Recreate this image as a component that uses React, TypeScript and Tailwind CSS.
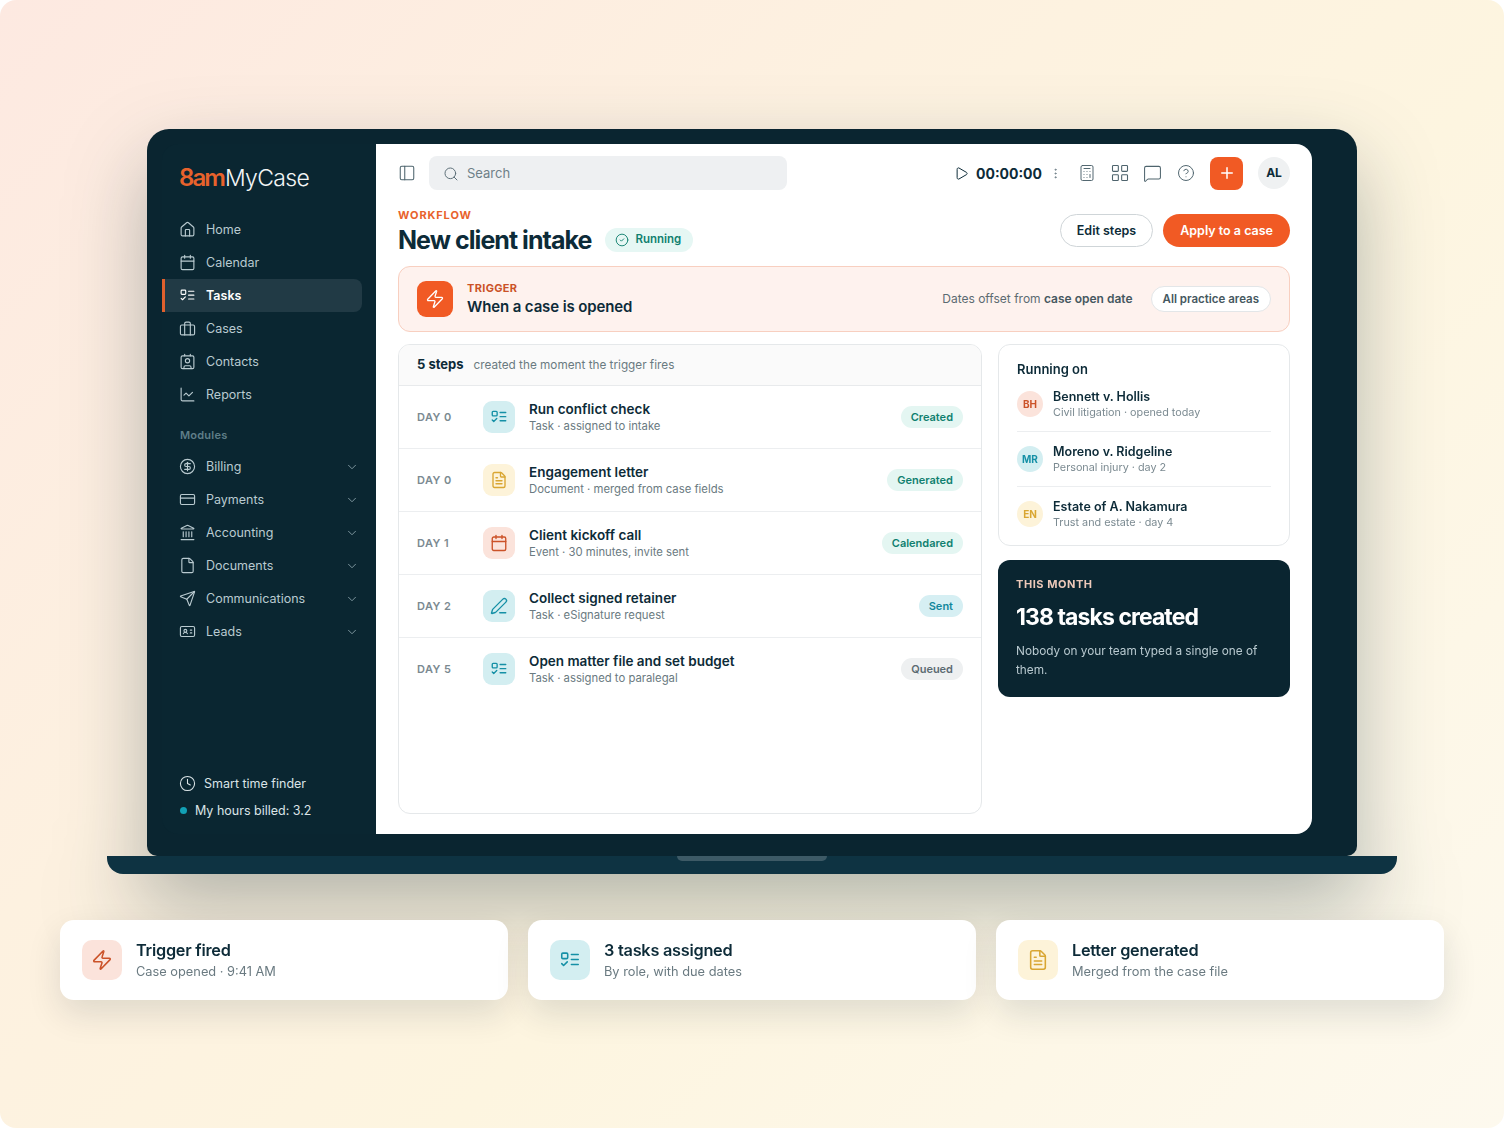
import {
  Calculator,
  Calendar,
  ChartLine,
  ChevronDown,
  CircleCheck,
  CircleDollarSign,
  CircleHelp,
  Clock,
  Contact,
  CreditCard,
  EllipsisVertical,
  File,
  FileText,
  House,
  IdCard,
  Landmark,
  LayoutGrid,
  MessageSquare,
  PanelLeft,
  PenLine,
  Play,
  Plus,
  Search,
  Send,
  Zap,
} from "lucide-react";
import type { ComponentType } from "react";

type IconProps = { size?: number; strokeWidth?: number; className?: string };
type Icon = ComponentType<IconProps>;

function CaseIcon({ size = 16, strokeWidth = 1.5, className }: IconProps) {
  return (
    <svg width={size} height={size} viewBox="0 0 24 24" fill="none" stroke="currentColor" strokeWidth={strokeWidth} strokeLinecap="round" strokeLinejoin="round" className={className}>
      <rect x="2" y="7" width="20" height="14" rx="2" />
      <path d="M16 21V5a2 2 0 0 0-2-2h-4a2 2 0 0 0-2 2v16" />
    </svg>
  );
}

function TaskIcon({ size = 16, strokeWidth = 1.8, className }: IconProps) {
  return (
    <svg width={size} height={size} viewBox="0 0 24 24" fill="none" stroke="currentColor" strokeWidth={strokeWidth} strokeLinecap="round" strokeLinejoin="round" className={className}>
      <rect x="3" y="4.5" width="6.5" height="6" rx="1.2" />
      <path d="m3 16 2 2 4-4" />
      <path d="M13.5 6H21" />
      <path d="M13.5 11.5H21" />
      <path d="M13.5 17H21" />
    </svg>
  );
}

const mainNav: { label: string; icon: Icon; active?: boolean }[] = [
  { label: "Home", icon: House },
  { label: "Calendar", icon: Calendar },
  { label: "Tasks", icon: TaskIcon, active: true },
  { label: "Cases", icon: CaseIcon },
  { label: "Contacts", icon: Contact },
  { label: "Reports", icon: ChartLine },
];

const modules: { label: string; icon: Icon }[] = [
  { label: "Billing", icon: CircleDollarSign },
  { label: "Payments", icon: CreditCard },
  { label: "Accounting", icon: Landmark },
  { label: "Documents", icon: File },
  { label: "Communications", icon: Send },
  { label: "Leads", icon: IdCard },
];

const steps = [
  { day: "DAY 0", icon: TaskIcon, tone: "bg-[#d3eef1] text-[#1590a6]", title: "Run conflict check", sub: "Task · assigned to intake", badge: "Created", badgeTone: "bg-[#e4f6f2] text-[#10806f]" },
  { day: "DAY 0", icon: FileText, tone: "bg-[#fdf3d9] text-[#d9a632]", title: "Engagement letter", sub: "Document · merged from case fields", badge: "Generated", badgeTone: "bg-[#e4f6f2] text-[#10806f]" },
  { day: "DAY 1", icon: Calendar, tone: "bg-[#fbe3db] text-[#cb5228]", title: "Client kickoff call", sub: "Event · 30 minutes, invite sent", badge: "Calendared", badgeTone: "bg-[#e4f6f2] text-[#10806f]" },
  { day: "DAY 2", icon: PenLine, tone: "bg-[#d3eef1] text-[#1590a6]", title: "Collect signed retainer", sub: "Task · eSignature request", badge: "Sent", badgeTone: "bg-[#d6eff3] text-[#12879c]" },
  { day: "DAY 5", icon: TaskIcon, tone: "bg-[#d3eef1] text-[#1590a6]", title: "Open matter file and set budget", sub: "Task · assigned to paralegal", badge: "Queued", badgeTone: "bg-[#eef0f1] text-[#5c6b72]" },
];

const running = [
  { initials: "BH", tone: "bg-[#fbe3db] text-[#cb5228]", name: "Bennett v. Hollis", sub: "Civil litigation · opened today" },
  { initials: "MR", tone: "bg-[#d3eef1] text-[#1590a6]", name: "Moreno v. Ridgeline", sub: "Personal injury · day 2" },
  { initials: "EN", tone: "bg-[#fdf3d9] text-[#d9a632]", name: "Estate of A. Nakamura", sub: "Trust and estate · day 4" },
];

const events = [
  { icon: Zap, iconSize: 22, tone: "bg-[#fbe3db] text-[#cb5228]", title: "Trigger fired", sub: "Case opened · 9:41 AM" },
  { icon: TaskIcon, iconSize: 22, tone: "bg-[#d3eef1] text-[#1590a6]", title: "3 tasks assigned", sub: "By role, with due dates" },
  { icon: FileText, iconSize: 22, tone: "bg-[#fdf3d9] text-[#d9a632]", title: "Letter generated", sub: "Merged from the case file" },
];

function Sidebar() {
  return (
    <aside className="flex w-[214px] shrink-0 flex-col rounded-l-[16px] bg-[#0a2631] pr-[14px]">
      <div className="ml-[17px] mt-[15px] flex h-[38px] items-center leading-none">
        <span className="text-[24px] font-semibold tracking-[-0.08em] text-[#e8622c]">8am</span>
        <span className="ml-px text-[23px] font-light tracking-[-0.03em] text-[#f2f5f6]">MyCase</span>
      </div>

      <nav className="mt-[16px] flex flex-col">
        {mainNav.map((item) => (
          <div
            key={item.label}
            className={`flex h-[33px] items-center gap-[10px] text-[12.5px] ${
              item.active
                ? "rounded-r-[8px] border-l-[3px] border-[#e0602d] bg-[#213a45] pl-[14px] font-semibold text-white"
                : "pl-[17px] text-[#b9cad0]"
            }`}
          >
            <item.icon size={17} strokeWidth={1.6} className="shrink-0" />
            <span className="mt-[2px]">{item.label}</span>
          </div>
        ))}
      </nav>

      <div className="ml-[18px] mt-[15px] h-[18px] text-[11px] font-semibold leading-[18px] tracking-[0.02em] text-[#5f7e88]">Modules</div>

      <nav className="mt-[6px] flex flex-col">
        {modules.map((item) => (
          <div key={item.label} className="flex h-[33px] items-center gap-[10px] pl-[17px] pr-[3px] text-[12.5px] text-[#b9cad0]">
            <item.icon size={17} strokeWidth={1.6} className="shrink-0" />
            <span className="mt-[2px] flex-1">{item.label}</span>
            <ChevronDown size={14} strokeWidth={1.5} className="text-[#8ba4ac]" />
          </div>
        ))}
      </nav>

      <div className="mt-auto flex flex-col pb-[10px] pl-[17px] text-[12.5px] text-[#dbe4e7]">
        <div className="flex h-[27px] items-center gap-[8px]">
          <Clock size={17} strokeWidth={1.5} />
          <span className="mt-[2px]">Smart time finder</span>
        </div>
        <div className="ml-px flex h-[27px] items-center gap-[8px]">
          <span className="h-[7px] w-[7px] rounded-full bg-[#12a0b5]" />
          <span className="mt-[2px]">My hours billed: 3.2</span>
        </div>
      </div>
    </aside>
  );
}

function TopBar() {
  return (
    <header className="flex h-[34px] items-center">
      <PanelLeft size={18} strokeWidth={1.4} className="text-[#4e646d]" />
      <div className="ml-[13px] flex h-[34px] w-[358px] items-center gap-[8px] rounded-[8px] bg-[#eef0f2] pl-[14px] pt-px text-[13px] text-[#6f8088]">
        <Search size={16} strokeWidth={1.5} className="text-[#5e7079]" />
        Search
      </div>
      <Play size={15} strokeWidth={1.6} className="ml-[167px] text-[#0d2b38]" />
      <span className="ml-[7px] mt-px w-[65px] text-[14px] font-bold text-[#0d2b38]">00:00:00</span>
      <EllipsisVertical size={13} strokeWidth={1.8} className="ml-[8px] text-[#6f8088]" />
      <div className="ml-[8px] flex items-center text-[#4e646d]">
        <div className="flex w-[33px] justify-center"><Calculator size={18} strokeWidth={1.3} /></div>
        <div className="flex w-[33px] justify-center"><LayoutGrid size={20} strokeWidth={1.3} /></div>
        <div className="flex w-[33px] justify-center"><MessageSquare size={19} strokeWidth={1.3} /></div>
        <div className="flex w-[33px] justify-center"><CircleHelp size={18} strokeWidth={1.3} /></div>
      </div>
      <button className="ml-[8px] flex h-[33px] w-[33px] items-center justify-center rounded-[8px] bg-[#f15a24] text-white">
        <Plus size={18} strokeWidth={2} />
      </button>
      <div className="ml-auto flex h-[32px] w-[32px] items-center justify-center rounded-full bg-[#eff1f2] text-[12px] font-bold text-[#0d2b38]">AL</div>
    </header>
  );
}

function TriggerBanner() {
  return (
    <section className="mt-[12px] flex h-[66px] items-center rounded-[12px] border border-[#f8cfc0] bg-[#fef2ee] pl-[18px] pr-[18px]">
      <div className="flex h-[36px] w-[36px] items-center justify-center rounded-[9px] bg-[#f15a24] text-white">
        <Zap size={20} strokeWidth={1.6} />
      </div>
      <div className="ml-[14px]">
        <div className="text-[11px] font-bold leading-[14px] tracking-[0.03em] text-[#cb5228]">TRIGGER</div>
        <div className="mt-[2px] text-[15px] font-semibold leading-[20px] tracking-[-0.008em] text-[#0d2b38]">When a case is opened</div>
      </div>
      <div className="ml-auto text-[12px] text-[#5c6b72]">
        Dates offset from <span className="font-semibold text-[#46585f]">case open date</span>
      </div>
      <div className="ml-[18px] flex h-[26px] items-center rounded-full border border-[#e3e6e8] bg-white px-[11px] pt-px text-[11.5px] font-semibold text-[#46585f]">All practice areas</div>
    </section>
  );
}

function StepsCard() {
  return (
    <section className="overflow-hidden rounded-[12px] border border-[#e5e8ea]">
      <div className="flex h-[41px] items-center gap-[10px] border-b border-[#e8eaec] bg-[#fafafa] px-[18px]">
        <span className="text-[13px] font-bold text-[#0d2b38]">5 steps</span>
        <span className="pt-[2px] text-[11.75px] text-[#6a7a81]">created the moment the trigger fires</span>
      </div>
      {steps.map((step, i) => (
        <div key={step.title} className={`flex h-[63px] items-center border-b px-[18px] ${i < steps.length - 1 ? "border-[#eceef0]" : "border-transparent"}`}>
          <span className="w-[66px] text-[11px] font-semibold tracking-[0.04em] text-[#7b8a91]">{step.day}</span>
          <div className={`flex h-[32px] w-[32px] items-center justify-center rounded-[9px] ${step.tone}`}>
            <step.icon size={18} strokeWidth={1.8} />
          </div>
          <div className="ml-[14px] mt-px flex-1">
            <div className="text-[13.5px] font-semibold leading-[17px] text-[#0d2b38]">{step.title}</div>
            <div className="text-[11.3px] leading-[17px] text-[#6a7a81]">{step.sub}</div>
          </div>
          <span className={`flex h-[22px] items-center rounded-full px-[10px] text-[11px] font-semibold ${step.badgeTone}`}>{step.badge}</span>
        </div>
      ))}
    </section>
  );
}

function RunningCard() {
  return (
    <section className="rounded-[12px] border border-[#e5e8ea] px-[18px] pb-[3px] pt-[16px]">
      <h3 className="h-[16px] text-[13px] font-semibold leading-[16px] text-[#0d2b38]">Running on</h3>
      {running.map((r, i) => (
        <div key={r.name} className={`flex h-[55px] items-center gap-[10px] border-b ${i < running.length - 1 ? "border-[#eceef0]" : "border-transparent"}`}>
          <div className={`flex h-[26px] w-[26px] items-center justify-center rounded-full text-[10px] font-bold ${r.tone}`}>{r.initials}</div>
          <div className="mt-px">
            <div className="text-[12.5px] font-semibold leading-[16px] text-[#0d2b38]">{r.name}</div>
            <div className="text-[10.8px] leading-[16px] text-[#7b8a91]">{r.sub}</div>
          </div>
        </div>
      ))}
    </section>
  );
}

function MonthCard() {
  return (
    <section className="mt-[14px] h-[137px] rounded-[12px] bg-[#0a2530] px-[18px] pt-[17px]">
      <div className="text-[11px] font-bold leading-[14px] tracking-[0.05em] text-[#edc9b9]">THIS MONTH</div>
      <div className="mt-[11px] text-[23px] font-bold leading-[30px] tracking-[-0.04em] text-white">138 tasks created</div>
      <p className="mt-[10px] text-[11.8px] leading-[19px] text-[#b9cad0]">Nobody on your team typed a single one of them.</p>
    </section>
  );
}

function Main() {
  return (
    <main className="flex w-[936px] shrink-0 flex-col rounded-r-[16px] bg-white px-[22px] pb-[20px] pt-[12px]">
      <TopBar />
      <div className="mt-[18px] flex h-[46px] items-start justify-between">
        <div>
          <div className="text-[11px] font-bold leading-[14px] tracking-[0.08em] text-[#e8622c]">WORKFLOW</div>
          <div className="mt-[3px] flex items-center gap-[14px]">
            <h1 className="text-[25px] font-bold leading-[31px] tracking-[-0.038em] text-[#0d2b38]">New client intake</h1>
            <span className="-mt-[2px] flex h-[24px] items-center gap-[6px] rounded-full bg-[#e6f7f4] pl-[10px] pr-[12px] text-[11.5px] font-semibold text-[#10806f]">
              <CircleCheck size={14} strokeWidth={1.6} />
              Running
            </span>
          </div>
        </div>
        <div className="mt-[6px] flex items-center gap-[10px]">
          <button className="h-[33px] rounded-full border border-[#cfd5d8] px-[16px] pt-px text-[12.5px] font-semibold text-[#0d2b38]">Edit steps</button>
          <button className="h-[33px] rounded-full bg-[#f15a24] px-[17px] pt-px text-[12.5px] font-semibold text-white">Apply to a case</button>
        </div>
      </div>
      <TriggerBanner />
      <div className="mt-[12px] grid flex-1 grid-cols-[584px_292px] gap-[16px]">
        <StepsCard />
        <div className="flex flex-col">
          <RunningCard />
          <MonthCard />
        </div>
      </div>
    </main>
  );
}

export default function App() {
  return (
    <div className="flex h-[1128px] flex-col items-center overflow-hidden rounded-[16px] bg-[linear-gradient(135deg,#fde9e1_0%,#fdf1e0_35%,#fdf5e0_60%,#fdf9ee_100%)] pt-[129px] font-['Inter',sans-serif]">
      <div className="flex flex-col items-center drop-shadow-[0_34px_40px_rgba(10,37,48,0.3)]">
        <div className="flex h-[727px] w-[1210px] rounded-b-[10px] rounded-t-[22px] bg-[#0a2530] pb-[22px] pl-[15px] pr-[45px] pt-[15px]">
          <Sidebar />
          <Main />
        </div>
        <div className="flex h-[18px] w-[1290px] justify-center rounded-b-[16px] bg-[#0e3342]">
          <div className="h-[5px] w-[150px] rounded-b-[6px] bg-[#3d5a66]" />
        </div>
      </div>

      <div className="relative mt-[46px] flex w-[1384px] gap-[20px]">
        {events.map((e) => (
          <div key={e.title} className="flex h-[80px] flex-1 items-center gap-[14px] rounded-[14px] bg-white pl-[22px] shadow-[0_14px_34px_rgba(10,37,48,0.12)]">
            <div className={`flex h-[40px] w-[40px] items-center justify-center rounded-[10px] ${e.tone}`}>
              <e.icon size={e.iconSize} strokeWidth={1.7} />
            </div>
            <div>
              <div className="-mt-px text-[16.3px] font-semibold leading-[22px] tracking-[-0.015em] text-[#0d2b38]">{e.title}</div>
              <div className="mt-px text-[12.8px] leading-[19px] text-[#6a7a81]">{e.sub}</div>
            </div>
          </div>
        ))}
      </div>
    </div>
  );
}
